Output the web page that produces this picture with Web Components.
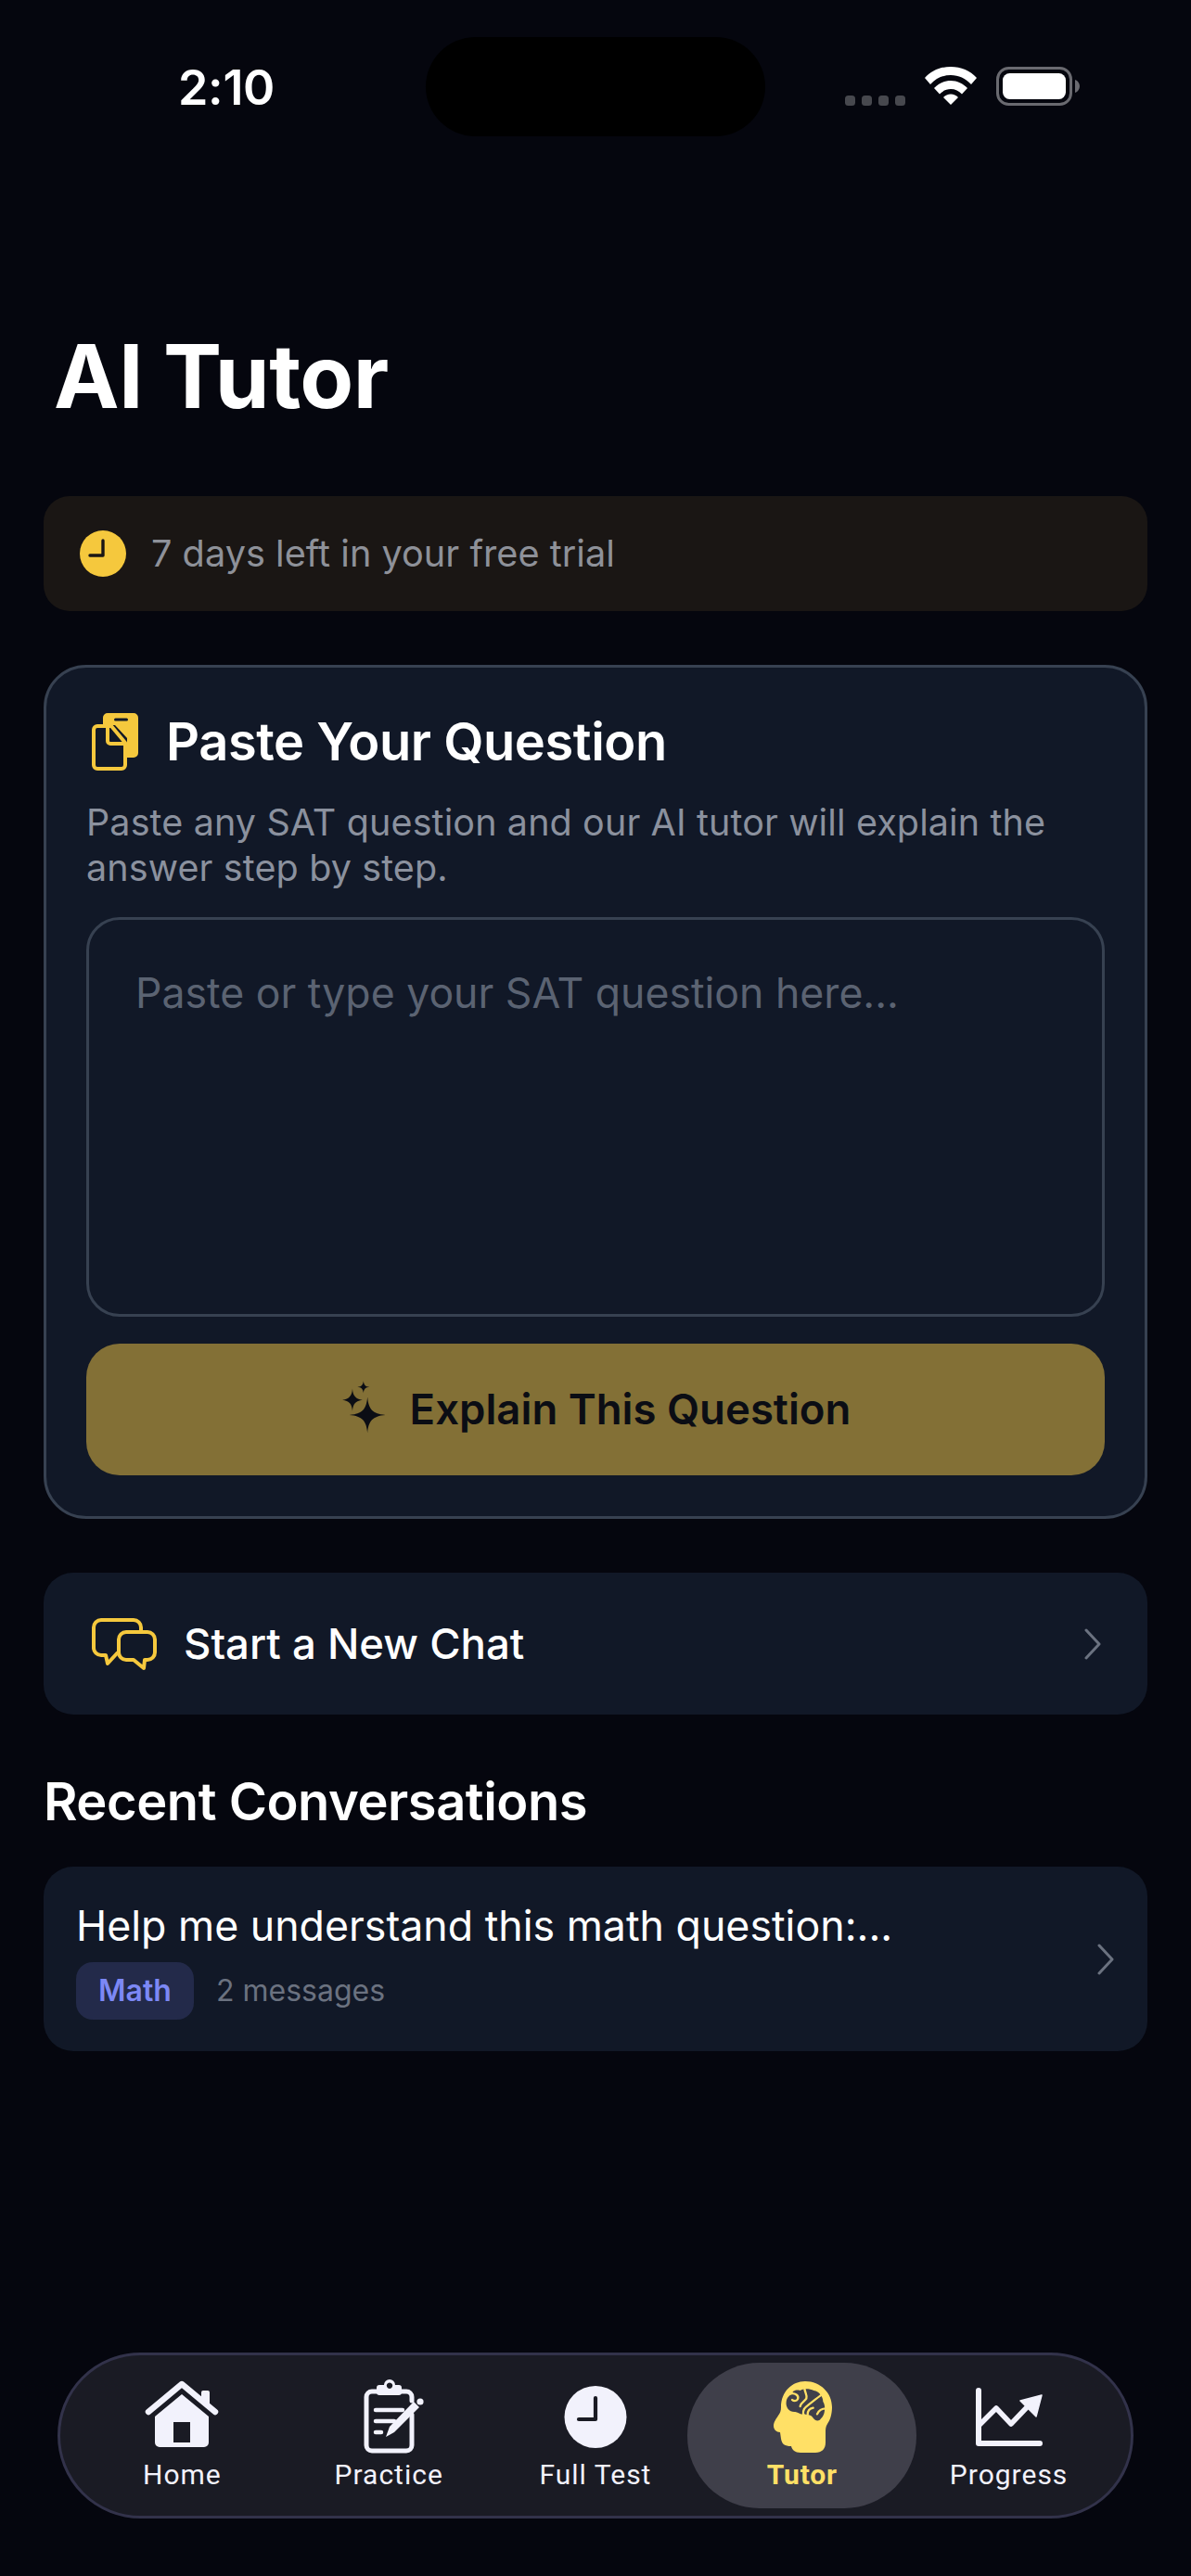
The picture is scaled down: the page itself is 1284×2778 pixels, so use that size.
<!DOCTYPE html>
<html lang="en">
<head>
<meta charset="utf-8">
<title>AI Tutor</title>
<style>
  html, body { margin: 0; padding: 0; background: #05060e; }
  body { font-family: Inter, "Noto Sans", sans-serif; color: #fff; }
  app-screen { height: 2778px; overflow: hidden; }
</style>
</head>
<body>
<app-screen>
  <status-bar slot="status"></status-bar>
  <h-title>AI Tutor</h-title>
  <trial-banner>7 days left in your free trial</trial-banner>
  <paste-card></paste-card>
  <chat-row>Start a New Chat</chat-row>
  <section-title>Recent Conversations</section-title>
  <recent-item tag="Math" meta="2 messages">Help me understand this math question:...</recent-item>
  <tab-bar slot="tabs">
    <tab-item label="Home" icon="home"></tab-item>
    <tab-item label="Practice" icon="practice"></tab-item>
    <tab-item label="Full Test" icon="clock"></tab-item>
    <tab-item label="Tutor" icon="tutor" active></tab-item>
    <tab-item label="Progress" icon="progress"></tab-item>
  </tab-bar>
</app-screen>

<script>
// icons, drawn in page pixels
const CHEVRON = `<svg width="20" height="34" viewBox="0 0 20 34" fill="none"><path d="M3 2l14 15L3 32" stroke="#6b7280" stroke-width="3" stroke-linecap="round" stroke-linejoin="round"/></svg>`;

const ICONS = {
  home: `<svg width="84" height="84" viewBox="155 2566 84 84"><path d="M161 2603l36-30 36 30" fill="none" stroke="currentColor" stroke-width="6.5" stroke-linecap="round" stroke-linejoin="round"/><path d="M218 2582a2 2 0 0 1 2-2h5a2 2 0 0 1 2 2v16l-9-7z" fill="currentColor"/><path fill-rule="evenodd" d="M197 2584l29 24v28a5 5 0 0 1-5 5h-48a5 5 0 0 1-5-5v-28zM188 2614v22h18v-22z" fill="currentColor"/></svg>`,
  practice: `<svg width="84" height="84" viewBox="377 2562 84 84" fill="none"><path d="M407 2577h-6a6 6 0 0 0-6 6v52a6 6 0 0 0 6 6h37a6 6 0 0 0 6-6v-33M432 2577h6a6 6 0 0 1 6 6v4" stroke="currentColor" stroke-width="5" stroke-linecap="round"/><path fill-rule="evenodd" d="M414 2570a6 6 0 0 1 12 0h4a3 3 0 0 1 3 3v5a3 3 0 0 1-3 3h-21a3 3 0 0 1-3-3v-5a3 3 0 0 1 3-3zM420 2567.500a3.200 3.200 0 1 0 .01 0z" fill="currentColor"/><path d="M405 2597h29M405 2609h20M405 2621h6" stroke="currentColor" stroke-width="4.500" stroke-linecap="round"/><path d="M416 2626l4-11 26-27 6 6-27 27z" fill="currentColor"/><circle cx="453" cy="2588" r="3.600" fill="currentColor"/></svg>`,
  clock: `<svg width="84" height="84" viewBox="601 2564 84 84"><circle cx="643" cy="2606.500" r="33.500" fill="currentColor"/><path d="M643 2586v23h-18" fill="none" stroke="#1a1b24" stroke-width="4.200" stroke-linecap="round" stroke-linejoin="round"/></svg>`,
  tutor: `<svg width="84" height="84" viewBox="823 2564 84 84"><path d="M868 2568c17 0 29 13 29 28 0 7-2 14-5 18-2 3-2 6-2 9v11c0 7-4 11-11 11h-16c-6 0-9-3-10-7-7 0-10-2-11-8l-1-7c-4 0-7-3-7-7 0-4 3-8 5-11 2-3 3-5 3-9 0-17 12-28 26-28z" fill="currentColor"/><g transform="translate(780 2540) scale(.33333)"><path d="M203 150C205 135 215 128 222 125 222 115 235 110 248 114 258 106 280 108 292 114 310 116 322 135 322 150 332 165 328 195 315 205 308 216 295 212 288 200 280 190 270 195 262 190 250 195 240 183 232 183 215 185 200 170 203 150Z" fill="#3f3f4a"/><path d="M216 124C232 121 245 130 240 142 236 150 226 148 222 144M262 106C262 120 272 128 268 140 262 150 250 152 248 165M258 192C256 175 262 170 275 160 290 148 300 140 314 130M272 192C272 178 280 172 290 170M332 172C318 172 308 178 303 190" fill="none" stroke="currentColor" stroke-width="7" stroke-linecap="round" stroke-linejoin="round"/></g></svg>`,
  progress: `<svg width="84" height="84" viewBox="1045 2564 84 84" fill="none"><path d="M1054 2578v57h66" stroke="currentColor" stroke-width="6" stroke-linecap="round" stroke-linejoin="round"/><path d="M1054 2616l19-19 16 17 19-20" stroke="currentColor" stroke-width="5.500" stroke-linecap="round" stroke-linejoin="round"/><path d="M1122 2583l-23 6 17 17z" fill="currentColor" stroke="currentColor" stroke-width="1.500" stroke-linejoin="round"/></svg>`
};

class AppScreen extends HTMLElement {
  constructor() {
    super();
    this.attachShadow({ mode: 'open' }).innerHTML = `
      <style>
        :host { display: flex; flex-direction: column; box-sizing: border-box; }
        main { flex: 1; display: flex; flex-direction: column; padding: 0 47px; }
        .tabs { padding: 0 62px 62px; }
      </style>
      <slot name="status"></slot>
      <main><slot></slot></main>
      <div class="tabs"><slot name="tabs"></slot></div>`;
  }
}

class StatusBar extends HTMLElement {
  constructor() {
    super();
    this.attachShadow({ mode: 'open' }).innerHTML = `
      <style>
        :host { display: block; height: 147px; padding-top: 40px; box-sizing: border-box; }
        .row { display: flex; align-items: flex-start; height: 107px; position: relative; }
        .time { width: 459px; padding-left: 192px; box-sizing: border-box; font: 600 52px/1 Inter, sans-serif; color: #fff; padding-top: 29px; letter-spacing: -.3px; }
        .island { width: 366px; height: 107px; border-radius: 54px; background: #000; }
        .right { margin-left: 86px; display: flex; align-items: flex-start; padding-top: 32px; }
        .dots { display: flex; gap: 7px; margin-top: 31px; }
        .dots i { width: 11px; height: 11px; border-radius: 3.500px; background: #47484e; }
        .wifi { margin-left: 21px; }
        .batt { margin-left: 21px; }
      </style>
      <div class="row">
        <div class="time">2:10</div>
        <div class="island"></div>
        <div class="right">
          <div class="dots"><i></i><i></i><i></i><i></i></div>
          <svg class="wifi" width="56" height="41" viewBox="0 0 56 41"><path d="M28 0c11 0 21 4 28 12l-6 7C44 12.500 36.500 9 28 9S12 12.500 6 19l-6-7C7 4 17 0 28 0z M28 15c7 0 13 3 18 8l-6 6.500c-3-3.500-7.500-5.500-12-5.500s-9 2-12 5.500L10 23c5-5 11-8 18-8z M28 29.500c3 0 6 1.200 8 3.500l-8 8-8-8c2-2.300 5-3.500 8-3.500z" fill="#fff"/></svg>
          <svg class="batt" width="90" height="42" viewBox="0 0 90 42"><rect x="1.500" y="1.500" width="79" height="39" rx="12" fill="none" stroke="#6a6a70" stroke-width="3"/><rect x="7" y="7" width="68" height="28" rx="7.500" fill="#fff"/><path d="M85 14c3 1 5 4 5 7s-2 6-5 7z" fill="#6a6a70"/></svg>
        </div>
      </div>`;
  }
}

class HTitle extends HTMLElement {
  constructor() {
    super();
    this.attachShadow({ mode: 'open' }).innerHTML = `
      <style>
        :host { display: block; margin-top: 212px; padding-left: 11px; font: 700 94.600px/1 Inter, sans-serif; color: #fff; letter-spacing: -.5px; height: 176px; }
      </style><slot></slot>`;
  }
}

class TrialBanner extends HTMLElement {
  constructor() {
    super();
    this.attachShadow({ mode: 'open' }).innerHTML = `
      <style>
        :host { display: flex; align-items: center; gap: 27px; height: 124px; padding-left: 39px; box-sizing: border-box; border-radius: 28px; background: #1a1614; color: #8e9199; font: 400 39.700px/1 Inter, sans-serif; }
        .t { padding-top: 2px; }
      </style>
      <svg width="50" height="50" viewBox="0 0 50 50"><circle cx="25" cy="25" r="25" fill="#f5c83d"/><path d="M25 11v16H11" fill="none" stroke="#1a1614" stroke-width="3.400" stroke-linecap="round" stroke-linejoin="round"/></svg>
      <span class="t"><slot></slot></span>`;
  }
}

class PasteCard extends HTMLElement {
  constructor() {
    super();
    this.attachShadow({ mode: 'open' }).innerHTML = `
      <style>
        :host { display: block; margin-top: 58px; height: 921px; box-sizing: border-box; border: 3px solid #374151; border-radius: 46px; background: #111827; padding: 0 43px; }
        .head { display: flex; align-items: center; gap: 28px; height: 160px; padding-left: 6px; box-sizing: border-box; font: 600 56px/1 Inter, sans-serif; color: #fff; }
        .head span { letter-spacing: -.45px; }
        p { margin: -17px 0 0; font: 400 39.500px/49px Inter, sans-serif; color: #8b919e; letter-spacing: .12px; }
        .area { margin-top: 28px; height: 431px; box-sizing: border-box; border: 3px solid #374151; border-radius: 36px; padding: 57px 50px 0; font: 400 44.600px/1 Inter, sans-serif; color: #5b6372; }
        button { display: flex; align-items: center; justify-content: center; gap: 23px; width: 100%; height: 142px; margin-top: 29px; border: 0; border-radius: 36px; background: #837036; color: #0b0d14; font: 600 45.500px/1 Inter, sans-serif; padding: 0 0 0 2px; }
      </style>
      <div class="head">
        <svg width="52" height="64" viewBox="99 768 52 64"><path d="M111 782v-8a5 5 0 0 1 5-5h28a5 5 0 0 1 5 5v38a5 5 0 0 1-5 5h-7v-21l-13-14z" fill="#f5c83d"/><rect x="123" y="774.500" width="15" height="3" rx="1.500" fill="#111827"/><path d="M105 783h15l15 18v24a4 4 0 0 1-4 4h-26a4 4 0 0 1-4-4v-38a4 4 0 0 1 4-4z" fill="#111827" stroke="#f5c83d" stroke-width="4" stroke-linejoin="round"/><path d="M116 783v16a3 3 0 0 0 3 3h15" fill="none" stroke="#f5c83d" stroke-width="4" stroke-linejoin="round"/></svg>
        <span>Paste Your Question</span>
      </div>
      <p>Paste any SAT question and our AI tutor will explain the answer step by step.</p>
      <div class="area">Paste or type your SAT question here...</div>
      <button>
        <svg width="50" height="67" viewBox="370 1492 46 62" fill="#0b0d14"><path d="M395 1510c1 12 5 17 18 18-13 1-17 6-18 18-1-12-5-17-18-18 13-1 17-6 18-18z"/><path d="M380 1502c.6 7 3 10 10 11-7 1-9.400 4-10 11-.6-7-3-10-10-11 7-1 9.400-4 10-11z"/><path d="M391 1494c.4 4 2 5.600 6 6-4 .4-5.600 2-6 6-.4-4-2-5.600-6-6 4-.4 5.600-2 6-6z"/></svg>
        <span>Explain This Question</span>
      </button>`;
  }
}

class ChatRow extends HTMLElement {
  constructor() {
    super();
    this.attachShadow({ mode: 'open' }).innerHTML = `
      <style>
        :host { display: flex; align-items: center; margin-top: 58px; height: 153px; padding: 0 49px 0 52px; box-sizing: border-box; border-radius: 32px; background: #111827; color: #fff; font: 500 45.500px/1 Inter, sans-serif; }
        .t { flex: 1; margin-left: 29px; }
      </style>
      <svg width="70" height="58" viewBox="99 1744 70 58" fill="none" stroke="#f5c83d" stroke-width="4" stroke-linejoin="round"><path d="M127 1782l-11 12-2-9h-5a8 8 0 0 1-8-8v-22a8 8 0 0 1 8-8h35a8 8 0 0 1 8 8v5"/><path d="M136 1760h23a8 8 0 0 1 8 8v14a8 8 0 0 1-8 8h-3l-1 9-11-9h-8a8 8 0 0 1-8-8v-14a8 8 0 0 1 8-8z"/></svg>
      <span class="t"><slot></slot></span>
      ${CHEVRON}`;
  }
}

class SectionTitle extends HTMLElement {
  constructor() {
    super();
    this.attachShadow({ mode: 'open' }).innerHTML = `
      <style>
        :host { display: block; margin-top: 60px; height: 104px; font: 600 56px/68px Inter, sans-serif; color: #fff; letter-spacing: -.45px; }
      </style><slot></slot>`;
  }
}

class RecentItem extends HTMLElement {
  constructor() {
    super();
    this.attachShadow({ mode: 'open' }).innerHTML = `
      <style>
        :host { display: flex; align-items: center; height: 199px; padding: 0 35px 0 35px; box-sizing: border-box; border-radius: 32px; background: #111827; }
        .body { flex: 1; padding-top: 8px; }
        .title { font: 400 44.700px/1 Inter, sans-serif; color: #fff; height: 44px; margin-bottom: 17px; }
        .meta { display: flex; align-items: center; gap: 24px; font: 400 32px/1 Inter, sans-serif; color: #6b7280; }
        .tag { width: 127px; height: 62px; border-radius: 18px; background: #232a4a; color: #7c88f5; font-weight: 600; display: flex; align-items: center; justify-content: center; }
      </style>
      <div class="body">
        <div class="title"><slot></slot></div>
        <div class="meta"><span class="tag">${this.getAttribute('tag')}</span><span>${this.getAttribute('meta')}</span></div>
      </div>
      ${CHEVRON}`;
  }
}

class TabBar extends HTMLElement {
  constructor() {
    super();
    this.attachShadow({ mode: 'open' }).innerHTML = `
      <style>
        :host { display: grid; grid-template-columns: repeat(5, 1fr); height: 179px; box-sizing: border-box; padding: 0 20px; border: 3px solid #32324a; border-radius: 90px; background: #1a1b24; }
      </style><slot></slot>`;
  }
}

class TabItem extends HTMLElement {
  constructor() {
    super();
    const active = this.hasAttribute('active');
    this.attachShadow({ mode: 'open' }).innerHTML = `
      <style>
        :host { display: flex; flex-direction: column; align-items: center; position: relative; color: ${active ? '#ffe066' : '#f2f2fc'}; }
        .pill { position: absolute; left: -12px; right: -12px; top: 8px; height: 157px; border-radius: 78px; background: #3f3f4a; }
        svg, span { position: relative; }
        .ic { height: 84px; margin-top: 24px; position: relative; }
        span { margin-top: 4px; font: ${active ? 700 : 400} 30px/34px Roboto, sans-serif; letter-spacing: ${active ? .8 : 1}px; color: ${active ? '#ffe066' : '#f2f2fc'}; white-space: nowrap; }
      </style>
      ${active ? '<div class="pill"></div>' : ''}
      <div class="ic">${ICONS[this.getAttribute('icon')]}</div>
      <span>${this.getAttribute('label')}</span>`;
  }
}

customElements.define('app-screen', AppScreen);
customElements.define('status-bar', StatusBar);
customElements.define('h-title', HTitle);
customElements.define('trial-banner', TrialBanner);
customElements.define('paste-card', PasteCard);
customElements.define('chat-row', ChatRow);
customElements.define('section-title', SectionTitle);
customElements.define('recent-item', RecentItem);
customElements.define('tab-bar', TabBar);
customElements.define('tab-item', TabItem);
</script>
</body>
</html>
